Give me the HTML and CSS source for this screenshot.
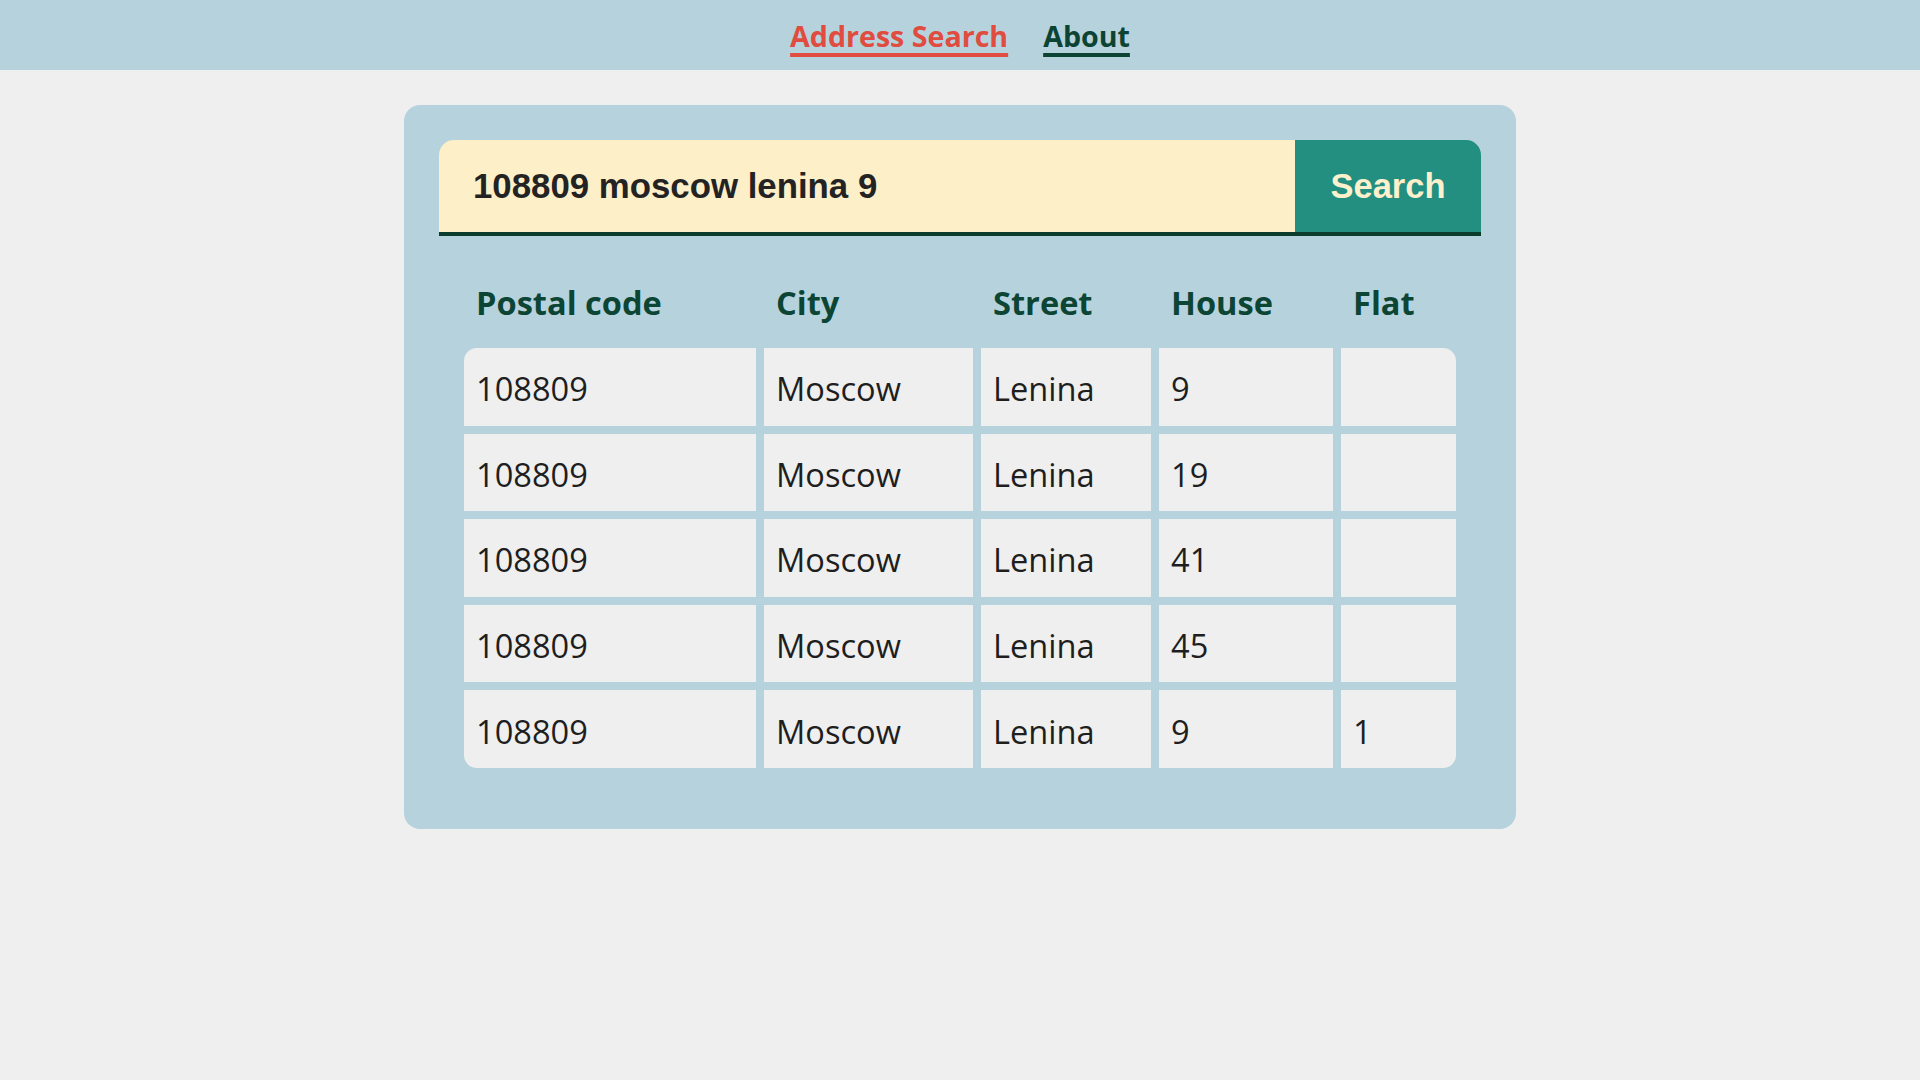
FILE: index.html
```html
<!DOCTYPE html>
<html lang="en">
<head>
<meta charset="utf-8">
<title>Address Search</title>
<link rel="stylesheet" href="styles.css">
</head>
<body>
<header class="topbar">
  <nav class="nav">
    <a class="nav-link nav-link--active" href="#">Address Search</a>
    <a class="nav-link" href="#">About</a>
  </nav>
</header>
<main class="panel">
  <form class="search">
    <input class="search-input" type="text" value="108809 moscow lenina 9">
    <button class="search-btn" type="button">Search</button>
  </form>
  <table class="results">
    <colgroup>
      <col class="c-postal">
      <col class="c-city">
      <col class="c-street">
      <col class="c-house">
      <col class="c-flat">
    </colgroup>
    <thead>
      <tr><th>Postal code</th><th>City</th><th>Street</th><th>House</th><th>Flat</th></tr>
    </thead>
    <tbody>
      <tr><td>108809</td><td>Moscow</td><td>Lenina</td><td>9</td><td></td></tr>
      <tr><td>108809</td><td>Moscow</td><td>Lenina</td><td>19</td><td></td></tr>
      <tr><td>108809</td><td>Moscow</td><td>Lenina</td><td>41</td><td></td></tr>
      <tr><td>108809</td><td>Moscow</td><td>Lenina</td><td>45</td><td></td></tr>
      <tr><td>108809</td><td>Moscow</td><td>Lenina</td><td>9</td><td>1</td></tr>
    </tbody>
  </table>
</main>
</body>
</html>
```
FILE: styles.css
```css
* { box-sizing: border-box; }

html, body {
  margin: 0;
  padding: 0;
  background: #efefef;
  font-family: "Open Sans", "Noto Sans", sans-serif;
}

.topbar {
  height: 70px;
  background: #b6d3dd;
  display: flex;
  justify-content: center;
  align-items: center;
  padding-top: 3px;
}

.nav {
  display: flex;
  gap: 35px;
}

.nav-link {
  font-size: 28.6px;
  font-weight: 700;
  color: #0c4332;
  text-decoration: underline;
  text-decoration-thickness: 4px;
  text-underline-offset: 6px;
  line-height: 1.2;
}

.nav-link--active {
  color: #e04c3f;
}

.panel {
  width: 1112px;
  margin: 35px auto 0;
  background: #b6d3dd;
  border-radius: 16px;
  padding: 35px 35px 35px;
}

.search {
  display: flex;
  margin: 0;
  border-bottom: 4px solid #0b3d2c;
}

.search-input {
  flex: 1;
  height: 92px;
  border: none;
  outline: none;
  margin: 0;
  background: #fdefc8;
  border-radius: 15px 0 0 0;
  padding: 0 0 0 34px;
  font-family: "Liberation Sans", Arial, sans-serif;
  font-weight: 700;
  font-size: 34.8px;
  color: #232323;
}

.search-btn {
  width: 186px;
  height: 92px;
  border: none;
  margin: 0;
  padding: 0;
  background: #228f80;
  border-radius: 0 15px 0 0;
  font-family: "Liberation Sans", Arial, sans-serif;
  font-weight: 700;
  font-size: 34.5px;
  color: #fdf0cc;
  cursor: pointer;
}

.results {
  width: 1008px;
  margin: 20px 17px 18px;
  table-layout: fixed;
  border-collapse: separate;
  border-spacing: 8px;
}

.c-postal { width: 292px; }
.c-city { width: 209px; }
.c-street { width: 170px; }
.c-house { width: 174px; }
.c-flat { width: 115px; }

.results th {
  height: 76px;
  padding: 0 12px;
  text-align: left;
  vertical-align: middle;
  font-size: 32.6px;
  font-weight: 700;
  color: #0d4535;
}

.results td {
  height: 77.6px;
  padding: 4px 12px 0;
  background: #efefef;
  vertical-align: middle;
  font-size: 32.6px;
  font-weight: 400;
  color: #1e1e1e;
  white-space: nowrap;
}

.results tbody tr:first-child td:first-child { border-top-left-radius: 13px; }
.results tbody tr:first-child td:last-child { border-top-right-radius: 13px; }
.results tbody tr:last-child td:first-child { border-bottom-left-radius: 13px; }
.results tbody tr:last-child td:last-child { border-bottom-right-radius: 13px; }
```
